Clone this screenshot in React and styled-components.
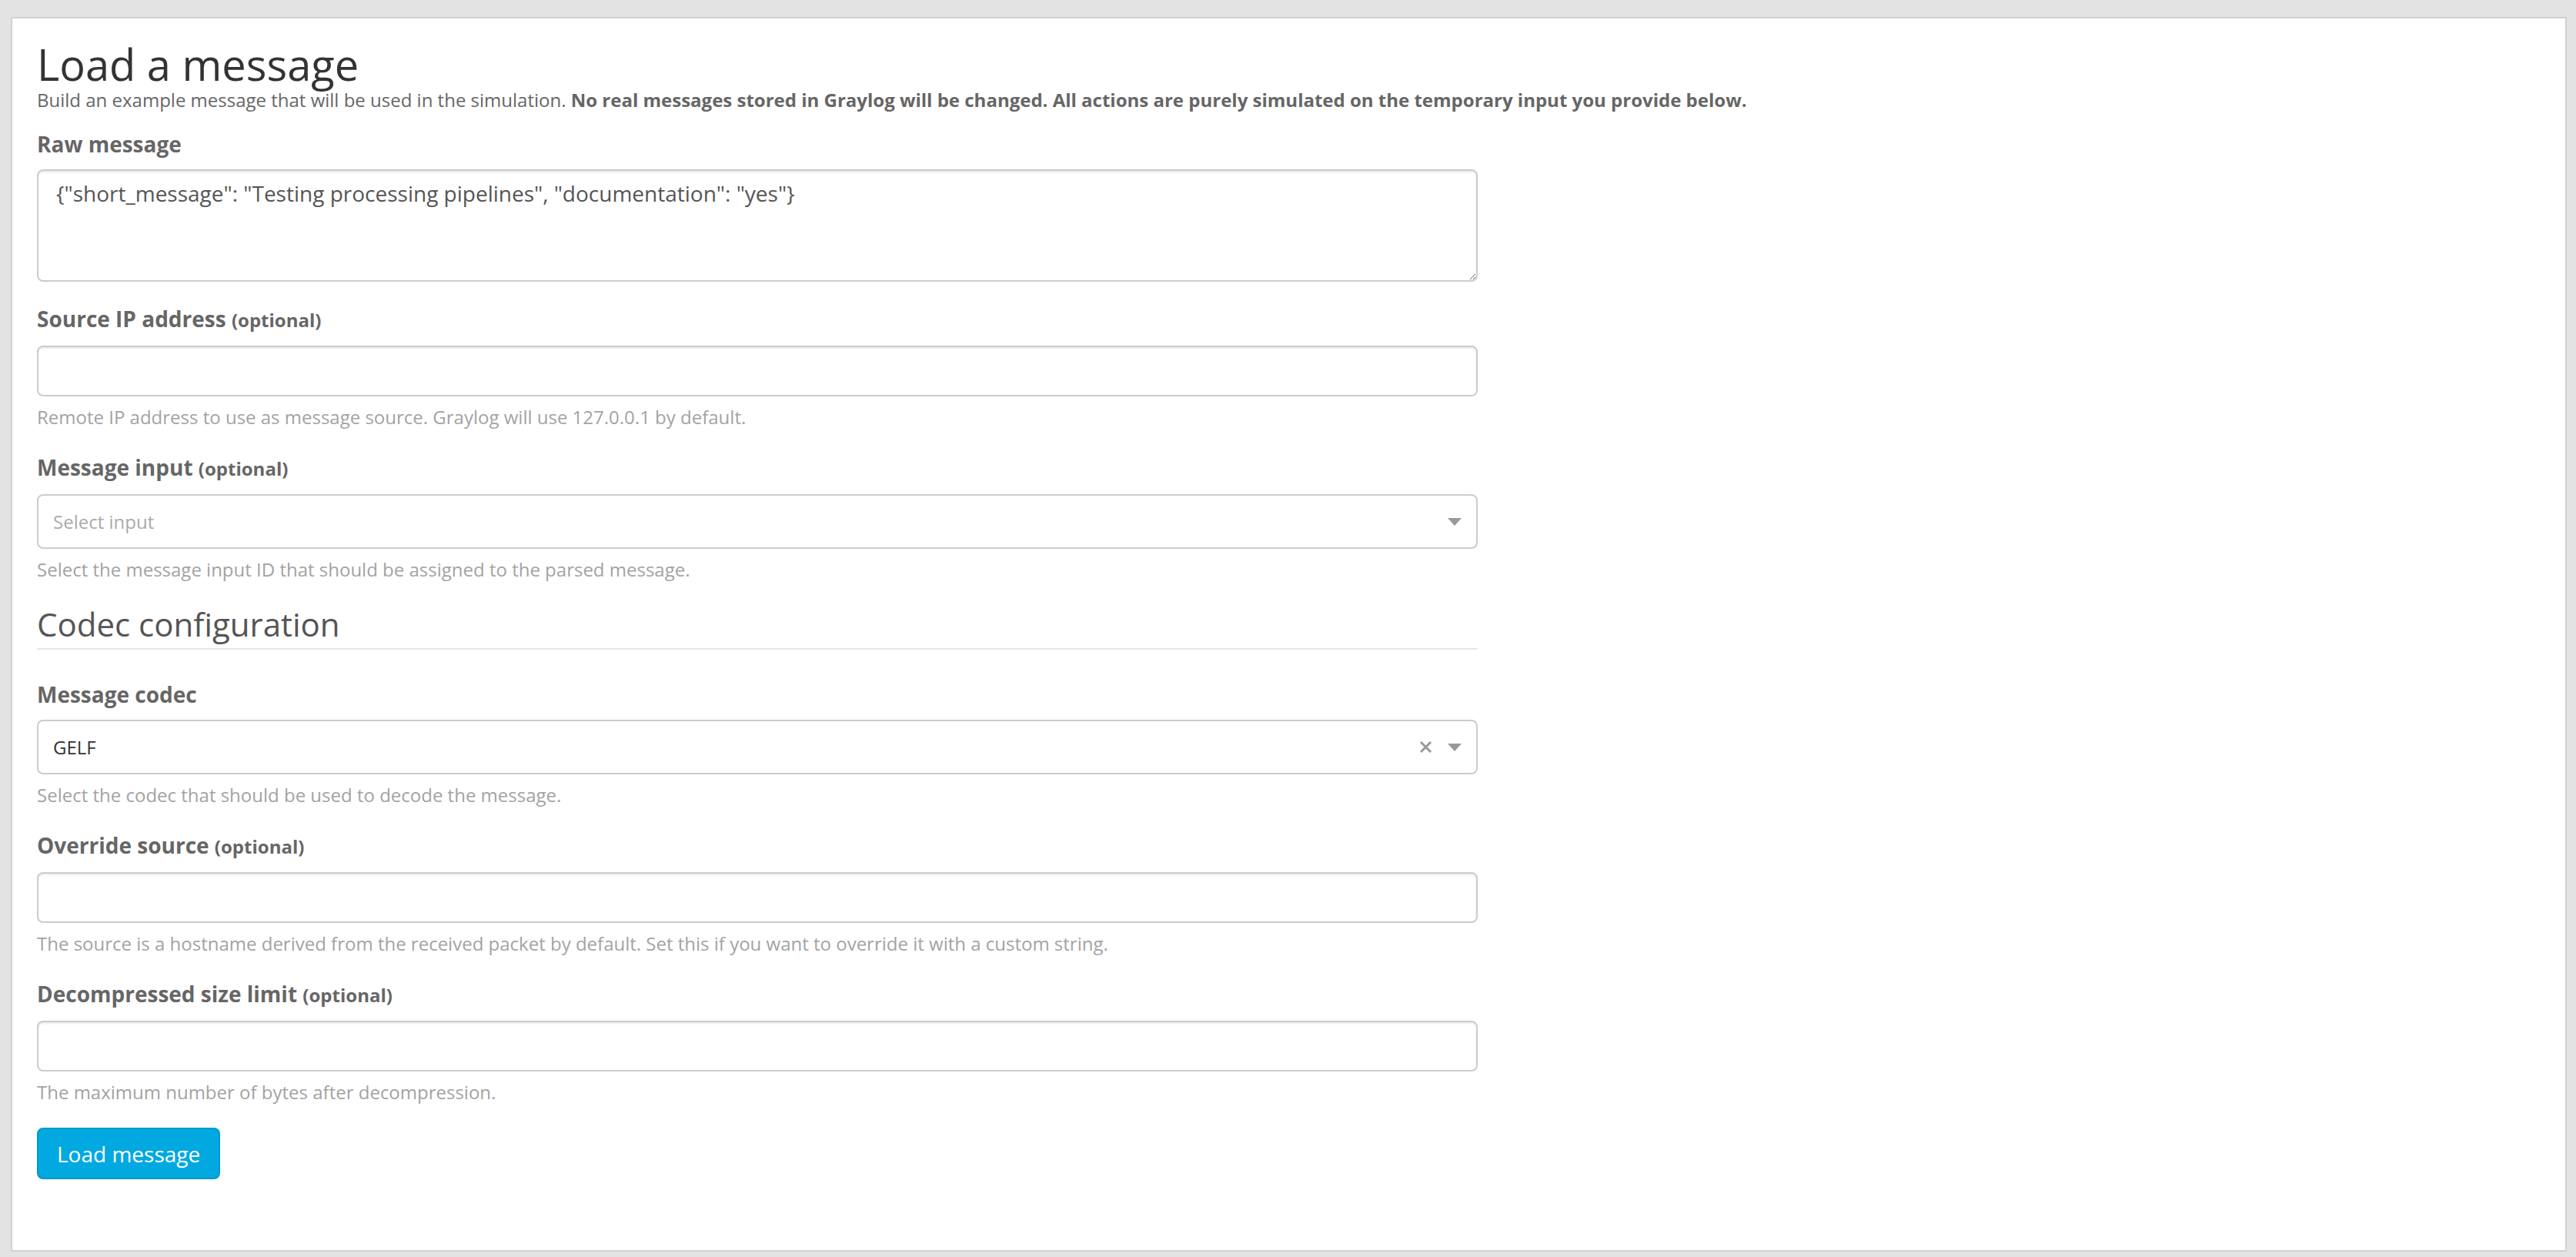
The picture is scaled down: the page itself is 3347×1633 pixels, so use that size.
import React from 'react';
import styled, { createGlobalStyle } from 'styled-components';

const GlobalStyle = createGlobalStyle`
  html, body { margin: 0; padding: 0; background: #e3e3e3; }
  body { font-family: "Open Sans", "Noto Sans", sans-serif; color: #666; }
  *, *::before, *::after { box-sizing: border-box; }
`;

const Page = styled.div`
  min-height: 100vh;
  padding: 22px 12px 7px 14px;
  display: flex;
`;

const Panel = styled.main`
  flex: 1;
  background: #fff;
  border: 2px solid #d2d2d2;
  padding: 29px 32px 40px;
`;

const FormColumn = styled.form`
  width: 1872px;
  margin-top: 21px;
`;

const Title = styled.h1`
  margin: 0;
  font-size: 56px;
  line-height: 60px;
  font-weight: 400;
  color: #333;
`;

const Lead = styled.p`
  margin: 0;
  font-size: 24px;
  line-height: 34px;
  color: #666;
  white-space: nowrap;
  b { font-weight: 700; }
`;

const Group = styled.div`
  margin-bottom: 29px;
`;

const Label = styled.label`
  display: block;
  font-size: 28px;
  line-height: 38px;
  font-weight: 700;
  color: #666;
  margin-bottom: 14px;
`;

const Optional = styled.small`
  font-size: 24px;
  font-weight: 700;
`;

const fieldBase = `
  display: block;
  width: 100%;
  border: 2px solid #ccc;
  border-radius: 8px;
  background: #fff;
  box-shadow: inset 0 2px 2px rgba(0,0,0,0.075);
  font-family: "Open Sans", "Noto Sans", sans-serif;
  color: #555;
  outline: none;
`;

const TextArea = styled.textarea`
  ${fieldBase}
  height: 146px;
  padding: 9px 23px;
  font-size: 28px;
  line-height: 40px;
  resize: vertical;
`;

const Input = styled.input`
  ${fieldBase}
  height: 66px;
  padding: 0 23px;
  font-size: 28px;
`;

const SelectBox = styled.div`
  ${fieldBase}
  box-shadow: none;
  height: 71px;
  display: flex;
  align-items: center;
  padding: 0 19px 0 19px;
`;

const SelectValue = styled.span`
  flex: 1;
  font-size: 24px;
  color: ${(p) => (p.$placeholder ? '#aaa' : '#333')};
`;

const Clear = styled.span`
  display: flex;
  align-items: center;
  margin-right: 20px;
`;

const Caret = styled.span`
  width: 0;
  height: 0;
  border-style: solid;
  border-width: 10px 9.5px 0 9.5px;
  border-color: #999 transparent transparent transparent;
`;

const Help = styled.p`
  margin: 10px 0 0;
  font-size: 24px;
  line-height: 34px;
  color: #a3a3a3;
`;

const SectionTitle = styled.h2`
  margin: 7px 0 39px;
  padding-bottom: 6px;
  border-bottom: 2px solid #e6e6e6;
  font-size: 42px;
  line-height: 50px;
  font-weight: 400;
  color: #555;
`;

const Actions = styled.div`
  margin-top: 2px;
`;

const Button = styled.button`
  height: 67px;
  padding: 0 24px;
  border: 2px solid #0398cb;
  border-radius: 8px;
  background: #02a9e1;
  color: #fff;
  font-family: "Open Sans", "Noto Sans", sans-serif;
  font-size: 28px;
  cursor: pointer;
`;

function Select({ value, placeholder, clearable }) {
  return (
    <SelectBox>
      <SelectValue $placeholder={!value}>{value || placeholder}</SelectValue>
      {clearable && (
        <Clear>
          <svg width="17" height="17" viewBox="0 0 17 17">
            <path d="M2 2 L15 15 M15 2 L2 15" stroke="#999" strokeWidth="3" />
          </svg>
        </Clear>
      )}
      <Caret />
    </SelectBox>
  );
}

export default function App() {
  return (
    <>
      <GlobalStyle />
      <Page>
        <Panel>
          <Title>Load a message</Title>
          <Lead>
            Build an example message that will be used in the simulation.{' '}
            <b>
              No real messages stored in Graylog will be changed. All actions are purely simulated
              on the temporary input you provide below.
            </b>
          </Lead>

          <FormColumn onSubmit={(e) => e.preventDefault()}>
            <Group>
              <Label>Raw message</Label>
              <TextArea
                defaultValue={'{"short_message": "Testing processing pipelines", "documentation": "yes"}'}
              />
            </Group>

            <Group>
              <Label>
                Source IP address <Optional>(optional)</Optional>
              </Label>
              <Input type="text" />
              <Help>Remote IP address to use as message source. Graylog will use 127.0.0.1 by default.</Help>
            </Group>

            <Group>
              <Label>
                Message input <Optional>(optional)</Optional>
              </Label>
              <Select placeholder="Select input" />
              <Help>Select the message input ID that should be assigned to the parsed message.</Help>
            </Group>

            <SectionTitle>Codec configuration</SectionTitle>

            <Group>
              <Label>Message codec</Label>
              <Select value="GELF" clearable />
              <Help>Select the codec that should be used to decode the message.</Help>
            </Group>

            <Group>
              <Label>
                Override source <Optional>(optional)</Optional>
              </Label>
              <Input type="text" />
              <Help>
                The source is a hostname derived from the received packet by default. Set this if you
                want to override it with a custom string.
              </Help>
            </Group>

            <Group>
              <Label>
                Decompressed size limit <Optional>(optional)</Optional>
              </Label>
              <Input type="text" />
              <Help>The maximum number of bytes after decompression.</Help>
            </Group>

            <Actions>
              <Button type="button">Load message</Button>
            </Actions>
          </FormColumn>
        </Panel>
      </Page>
    </>
  );
}
